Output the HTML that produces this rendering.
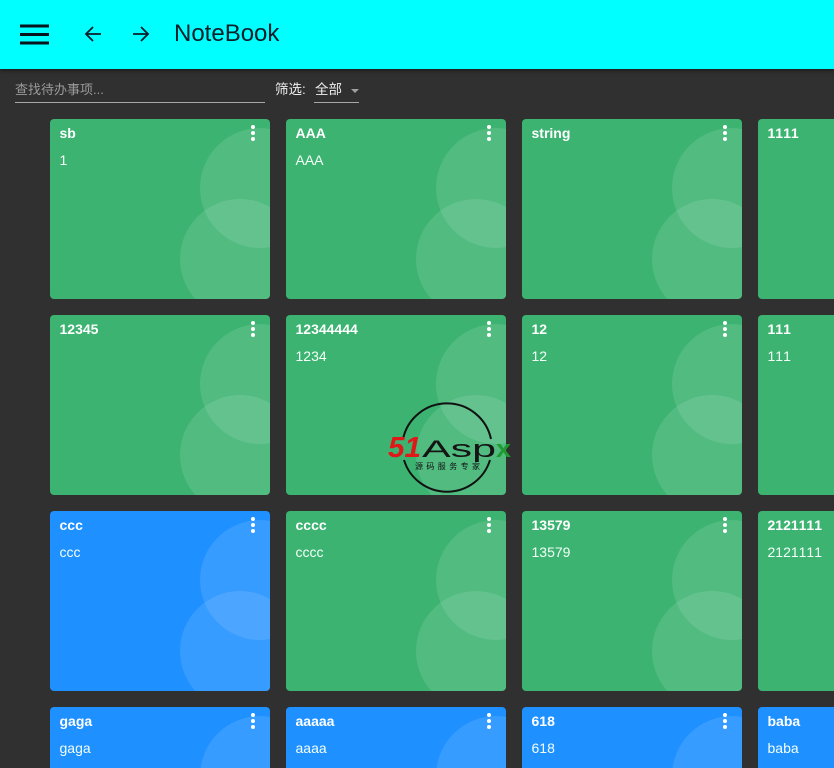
<!DOCTYPE html>
<html><head><meta charset="utf-8"><style>
*{box-sizing:border-box}
html,body{margin:0;padding:0;width:834px;height:768px;overflow:hidden;background:#303030}
#w{position:relative;width:834px;height:768px;overflow:hidden;background:#303030;font-family:"Liberation Sans","Noto Sans CJK SC",sans-serif;color:#fff;font-kerning:none}
.hd{position:absolute;left:0;top:0;width:834px;height:69px;background:#0ff;box-shadow:0 2px 4px rgba(0,0,0,.4)}
.hd svg{position:absolute}
.title{position:absolute;left:174px;top:19px;font-size:24px;line-height:30px;color:#0a1f2a}
.search{position:absolute;left:15px;top:80px;width:250px;height:23px;border-bottom:1px solid #a8a8a8;font-size:13px;line-height:20px;color:#9a9a9a}
.fl{position:absolute;left:275px;top:80px;font-size:13.5px;line-height:20px;color:#eee}
.sel{position:absolute;left:314px;top:80px;width:45px;height:23px;border-bottom:1px solid #a8a8a8;font-size:13.5px;line-height:20px;padding-left:1px;color:#eee}
.sel:after{content:"";position:absolute;left:37px;top:9px;border:4px solid transparent;border-top:4px solid #a0a0a0;border-bottom:0}
.c{position:absolute;width:220px;height:180px;border-radius:4px;overflow:hidden;background:#3cb371}
.b{background:#1e90ff}
.l{height:61px;border-radius:4px 4px 0 0}
.r{width:76px;border-radius:4px 0 0 4px}
.r.l{border-radius:4px 0 0 0}
.c:before,.c:after{content:"";position:absolute;width:120px;height:120px;border-radius:50%;background:rgba(255,255,255,.11)}
.c:before{left:150px;top:9px}
.c:after{left:130px;top:80px}
.t{position:absolute;left:9.5px;top:5px;font-size:14px;line-height:18px;font-weight:bold;white-space:nowrap;z-index:2}
.d{position:absolute;left:9.5px;top:32px;font-size:14px;line-height:18px;white-space:nowrap;color:#f4fff8;z-index:2}
.m{position:absolute;left:200.5px;top:6px;width:4px;height:4px;z-index:2;border-radius:50%;background:#fff;box-shadow:0 6px 0 #fff,0 12px 0 #fff}
.logo{position:absolute;left:380px;top:398px;z-index:5}
</style></head><body><div id="w">
<div class="hd">
<svg style="left:20px;top:24px" width="29" height="21" viewBox="0 0 29 21"><path d="M0 2H29M0 10.5H29M0 19H29" stroke="#08141c" stroke-width="3" fill="none"/></svg>
<svg style="left:83px;top:24px" width="20" height="20" viewBox="0 0 20 20"><path d="M18 10H3M10 3L3 10L10 17" stroke="#0a1f2a" stroke-width="1.8" fill="none"/></svg>
<svg style="left:131px;top:24px" width="20" height="20" viewBox="0 0 20 20"><path d="M2 10H17M10 3L17 10L10 17" stroke="#0a1f2a" stroke-width="1.8" fill="none"/></svg>
<div class="title">NoteBook</div>
</div>
<div class="search">查找待办事项...</div>
<div class="fl">筛选:</div>
<div class="sel">全部</div>

<div class="c" style="left:50px;top:119px"><div class="t">sb</div><div class="d">1</div><div class="m"></div></div>
<div class="c" style="left:286px;top:119px"><div class="t">AAA</div><div class="d">AAA</div><div class="m"></div></div>
<div class="c" style="left:522px;top:119px"><div class="t">string</div><div class="m"></div></div>
<div class="c r" style="left:758px;top:119px"><div class="t">1111</div></div>

<div class="c" style="left:50px;top:315px"><div class="t">12345</div><div class="m"></div></div>
<div class="c" style="left:286px;top:315px"><div class="t">12344444</div><div class="d">1234</div><div class="m"></div></div>
<div class="c" style="left:522px;top:315px"><div class="t">12</div><div class="d">12</div><div class="m"></div></div>
<div class="c r" style="left:758px;top:315px"><div class="t">111</div><div class="d">111</div></div>

<div class="c b" style="left:50px;top:511px"><div class="t">ccc</div><div class="d">ccc</div><div class="m"></div></div>
<div class="c" style="left:286px;top:511px"><div class="t">cccc</div><div class="d">cccc</div><div class="m"></div></div>
<div class="c" style="left:522px;top:511px"><div class="t">13579</div><div class="d">13579</div><div class="m"></div></div>
<div class="c r" style="left:758px;top:511px"><div class="t">2121111</div><div class="d">2121111</div></div>

<div class="c b l" style="left:50px;top:707px"><div class="t">gaga</div><div class="d">gaga</div><div class="m"></div></div>
<div class="c b l" style="left:286px;top:707px"><div class="t">aaaaa</div><div class="d">aaaa</div><div class="m"></div></div>
<div class="c b l" style="left:522px;top:707px"><div class="t">618</div><div class="d">618</div><div class="m"></div></div>
<div class="c b l r" style="left:758px;top:707px"><div class="t">baba</div><div class="d">baba</div></div>

<svg class="logo" width="136" height="100" viewBox="0 0 136 100">
<path d="M23 41A45 45 0 0 1 111 41" fill="none" stroke="#111" stroke-width="2"/>
<path d="M24 62A45 45 0 0 0 110 62" fill="none" stroke="#111" stroke-width="2"/>
<text x="8" y="59" font-family="Liberation Sans,sans-serif" font-size="29" font-weight="bold" font-style="italic" fill="#e01818" textLength="33" lengthAdjust="spacingAndGlyphs">51</text>
<text x="42" y="59" font-family="Liberation Sans,sans-serif" font-size="24" fill="#141414" textLength="74" lengthAdjust="spacingAndGlyphs">Asp</text>
<text x="116" y="59" font-family="Liberation Sans,sans-serif" font-size="24" font-weight="bold" fill="#1f9a30" textLength="15" lengthAdjust="spacingAndGlyphs">x</text>
<text x="35" y="71" font-family="Noto Sans CJK SC,sans-serif" font-size="8" fill="#111" textLength="65">源码服务专家</text>
</svg>
</div></body></html>
